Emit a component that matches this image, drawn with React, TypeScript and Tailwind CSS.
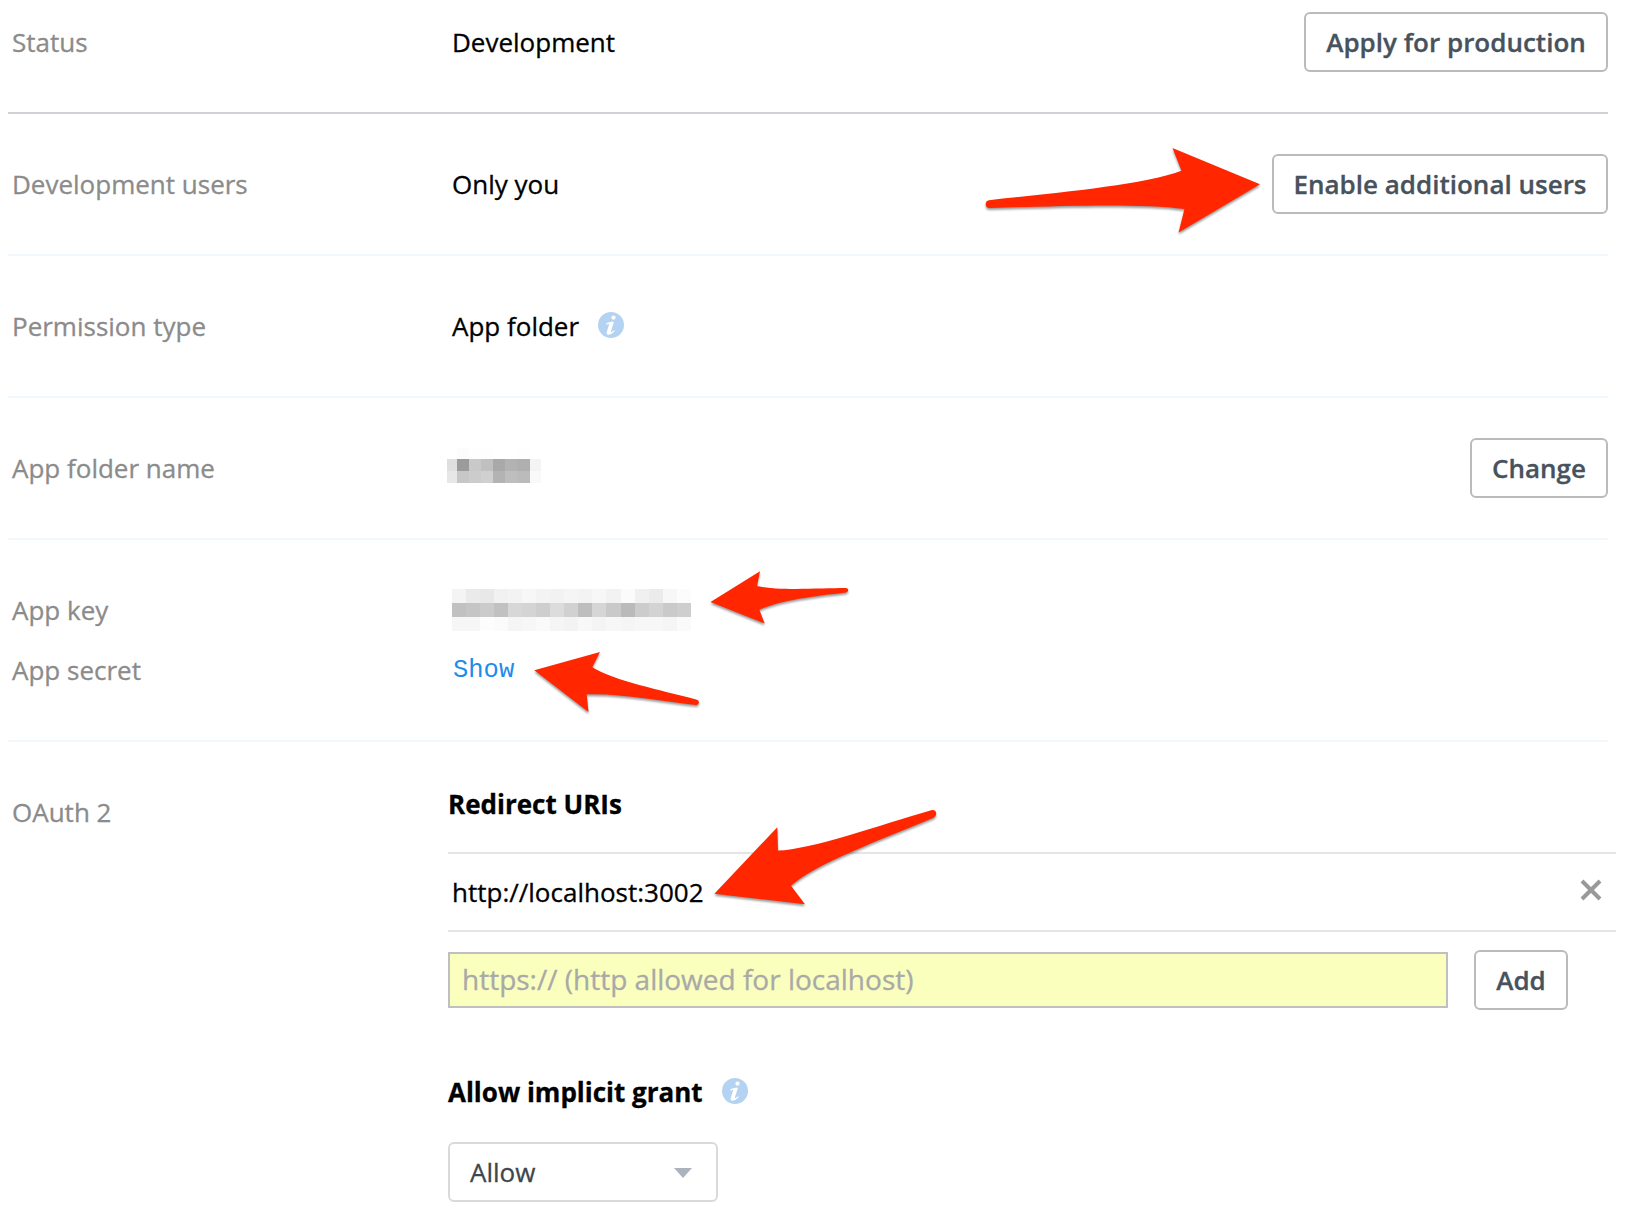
import type { ReactNode } from "react";

function Row({ label, border = "border-[#f0f8ff]", children, action }: { label: ReactNode; border?: string; children: ReactNode; action?: ReactNode }) {
  return (
    <div className={`ml-2 mr-7 flex border-b-2 py-10 pl-1 leading-[60px] ${border}`}>
      <div className="w-[440px] shrink-0 text-[#8b8b8b]">{label}</div>
      <div className="flex grow items-start">{children}</div>
      {action}
    </div>
  );
}

function Button({ width, children }: { width: string; children: ReactNode }) {
  return (
    <button className={`flex h-[60px] shrink-0 justify-center rounded-md border-2 border-[#bbbbbb] text-[26px] leading-[56px] font-semibold whitespace-nowrap text-[#47525d] ${width}`}>
      {children}
    </button>
  );
}

function Info({ className }: { className: string }) {
  return (
    <svg className={`size-[26px] shrink-0 ${className}`} viewBox="0 0 26 26">
      <circle cx="13" cy="13" r="13" fill="#b4d3f2" />
      <circle cx="15.5" cy="5.6" r="2.1" fill="#fff" />
      <path d="M8 11.6 Q11 10 14.8 9.5 L15.8 10.2 L13 19 Q12.6 20.4 13.6 20 L16.2 18.2 L16.8 18.9 Q13.8 22.4 10.6 22.7 Q8 22.6 8.8 19.8 L11 12.8 Q11.3 11.9 10.4 12.1 L8.3 12.6 Z" fill="#fff" />
    </svg>
  );
}

const nameCells = [
  ["#ffffff", "#fcfcfc", "#fefefe", "#fefefe", "#ffffff", "#ffffff", "#fefefe", "#ffffff"],
  ["#dfdfdf", "#9b9b9b", "#c9c9c9", "#c0c0c0", "#a9a9a9", "#b3b3b3", "#afafaf", "#f4f4f4"],
  ["#e7e7e7", "#c7c7c7", "#cccccc", "#d0d0d0", "#b3b3b3", "#bebebe", "#bbbbbb", "#f9f9f9"],
];

const keyCells = [
  ["#f4f4f4", "#eaeaea", "#e8e8e8", "#f1f1f1", "#f3f3f3", "#f7f7f7", "#f3f3f3", "#f2f2f2", "#f5f5f5", "#f3f3f3", "#f7f7f7", "#f2f2f2", "#fbfbfb", "#f0f0f0", "#ebebeb", "#f7f7f7", "#fcfcfc"],
  ["#c1c1c1", "#c5c5c5", "#cbcbcb", "#c1c1c1", "#d7d7d7", "#d4d4d4", "#cecece", "#dcdcdc", "#d1d1d1", "#bebebe", "#d6d6d6", "#c9c9c9", "#bababa", "#cccccc", "#d3d3d3", "#cacaca", "#cecece"],
  ["#f6f6f6", "#f6f6f6", "#fdfdfd", "#fbfbfb", "#f5f5f5", "#f7f7f7", "#fafafa", "#f5f5f5", "#f3f3f3", "#f8f8f8", "#f4f4f4", "#f7f7f7", "#f5f5f5", "#f7f7f7", "#f7f7f7", "#f5f5f5", "#fafafa"],
];

function Mosaic({ cells, className }: { cells: string[][]; className: string }) {
  return (
    <div className={`grid ${className}`}>
      {cells.flat().map((c, i) => (
        <span key={i} style={{ backgroundColor: c }} />
      ))}
    </div>
  );
}

function Arrows() {
  return (
    <svg className="pointer-events-none absolute top-0 left-0 h-[1220px] w-[1636px] drop-shadow-[0_2px_1px_rgba(0,0,0,0.4)]" viewBox="0 0 1636 1220" fill="#ff2600">
      <path d="M1260 184.2 L1172.5 148 L1181.5 170.7 C1140 186 1050 193 989 200.3 Q985.7 201 985.7 204.2 Q986 208 989.5 208 C1060 206 1140 203 1184.5 209 L1178.6 232.5 Z" />
      <path d="M710.5 602 L760 571.3 L757 586 C780 591 820 588 846 588 Q848.5 588.5 848.3 590 Q848.3 592 846 592.4 C815 596 780 600 759.3 609.7 L764.7 623.5 Z" />
      <path d="M534.3 670.3 L600 652 L592.3 667.3 C615 681 660 690 697 699.7 Q699 700.5 699 702.5 Q698.5 705 696 705 C660 701 620 693 586.7 694.3 L588.5 712 Z" />
      <path d="M714.4 893.7 L777.3 827.3 L778 850.5 C810 850 880 825 932 810 Q935.5 809.5 936.2 813 Q936.5 816 933.5 817.7 C880 840 815 864 791 885.7 L805 904.3 Z" />
    </svg>
  );
}

export default function App() {
  return (
    <div className="relative h-[1220px] w-[1636px] overflow-hidden bg-white font-['Open_Sans',sans-serif] text-[26px] text-black [-webkit-text-stroke:0.3px]">
      <div className="-mt-7">
        <Row label="Status" border="border-[#cfd3d7]" action={<Button width="w-[304px]">Apply for production</Button>}>Development</Row>
        <Row label="Development users" action={<Button width="w-[336px]">Enable additional users</Button>}>Only you</Row>
        <Row label="Permission type">
          App folder
          <Info className="mt-4 ml-[19px]" />
        </Row>
        <Row label="App folder name" action={<Button width="w-[138px]">Change</Button>}>
          <Mosaic cells={nameCells} className="mt-[10px] -ml-[5px] grid-cols-[10px_12px_12px_12px_12px_12px_13px_11px] grid-rows-[11px_12px_12px]" />
        </Row>
        <Row label={<><div>App key</div><div>App secret</div></>}>
          <div>
            <Mosaic cells={keyCells} className="-ml-[0.5px] mt-[9px] w-[239.5px] grid-cols-17 grid-rows-[14px_14px_14px]" />
            <div className="mt-[10px] -mb-[3px] ml-px font-['Courier','Liberation_Mono',monospace] text-[25.5px] text-[#1f8ceb] [-webkit-text-stroke:0]">Show</div>
          </div>
        </Row>
      </div>
      <div className="flex pl-3">
        <div className="w-[436px] shrink-0 pt-10 leading-[60px] text-[#8b8b8b]">OAuth 2</div>
        <div className="w-[1168px]">
          <h3 className="h-[110px] pt-8 leading-[60px] font-bold">Redirect URIs</h3>
          <div className="flex h-20 items-center justify-between border-y-2 border-[#e5e5e5] pr-[14px] pl-1">
            <span>http://localhost:3002</span>
            <svg className="-mt-1 size-[22px]" viewBox="0 0 22 22" stroke="#999999" strokeWidth="4"><path d="M2 2 L20 20 M20 2 L2 20" /></svg>
          </div>
          <div className="mt-[18px] flex items-center">
            <input className="h-14 w-[1000px] border-2 border-[#bfbfbf] bg-[#faffbd] px-3 pb-[2px] text-[28px] placeholder:text-[#a9a9a9]" placeholder="https:// (http allowed for localhost)" />
            <div className="ml-[26px] flex"><Button width="w-[94px]">Add</Button></div>
          </div>
          <div className="mt-[52px] flex leading-[60px] font-bold">
            Allow implicit grant
            <Info className="mt-4 ml-[19px]" />
          </div>
          <div className="mt-5 flex h-[60px] w-[270px] items-center justify-between rounded-md border-2 border-[#dadada] pr-6 pl-5 text-[#3d464d]">
            Allow
            <svg className="mt-[2px] h-[10px] w-[18px]" viewBox="0 0 18 10" fill="#abb4bc"><path d="M0 0 H18 L9 10 Z" /></svg>
          </div>
        </div>
      </div>
      <Arrows />
    </div>
  );
}
